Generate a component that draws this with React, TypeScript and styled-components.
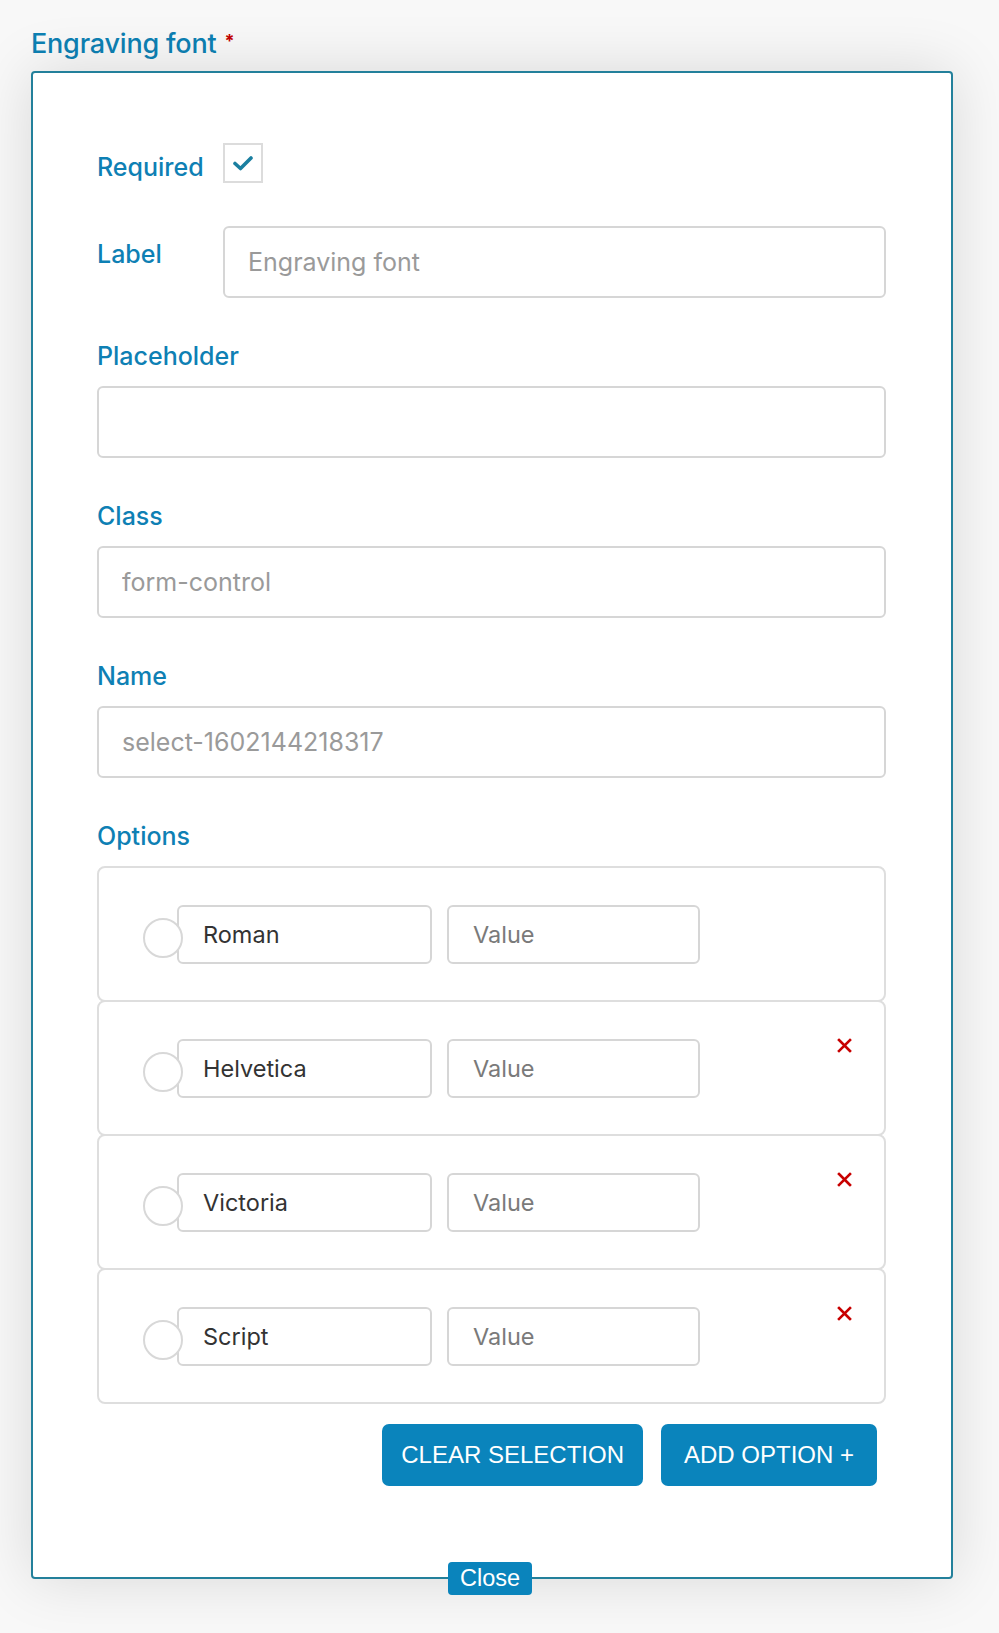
import React, { useState } from 'react';
import styled, { createGlobalStyle } from 'styled-components';

const GlobalStyle = createGlobalStyle`
  html, body {
    margin: 0;
    padding: 0;
    background: #f8f8f8;
  }
  body {
    font-family: Inter, "Noto Sans", sans-serif;
  }
`;

const Page = styled.div`
  padding: 26px 46px 40px 31px;
  min-height: 1633px;
  box-sizing: border-box;
`;

const FieldTitle = styled.div`
  display: flex;
  align-items: center;
  gap: 8px;
  height: 34px;
  margin-bottom: 11px;
  color: #0d80b3;
  font-size: 27px;
  font-weight: 500;
  letter-spacing: -0.2px;
`;

const Star = styled.span`
  color: #c40000;
  font-size: 18px;
  font-weight: 700;
  margin-top: -6px;
`;

const Panel = styled.div`
  position: relative;
  width: 922px;
  height: 1508px;
  box-sizing: border-box;
  background: #fff;
  border: 2px solid #23809b;
  border-radius: 4px;
  box-shadow: 0 0 60px rgba(0, 0, 0, 0.13);
  padding: 70px 65px 0 64px;
`;

const InlineRow = styled.div<{ $mb: number }>`
  display: flex;
  align-items: flex-start;
  margin-bottom: ${(p) => p.$mb}px;
`;

const Label = styled.label<{ $inline?: boolean; $pt?: number }>`
  display: block;
  color: #0e80b4;
  font-size: 25px;
  font-weight: 500;
  line-height: 30px;
  height: 30px;
  ${(p) => (p.$inline ? 'width: 126px; flex: none;' : 'margin-bottom: 15px;')}
  padding-top: ${(p) => p.$pt ?? 0}px;
`;

const CheckBox = styled.div`
  width: 40px;
  height: 40px;
  box-sizing: border-box;
  border: 2px solid #dcdcdc;
  display: flex;
  align-items: center;
  justify-content: center;
`;

const TextInput = styled.input`
  display: block;
  width: 100%;
  height: 72px;
  box-sizing: border-box;
  border: 2px solid #d6d6d6;
  border-radius: 6px;
  padding: 0 23px;
  font-family: Inter, "Noto Sans", sans-serif;
  font-size: 25px;
  color: #333;
  background: #fff;
  outline: none;
  &::placeholder {
    color: #9a9a9a;
  }
`;

const Group = styled.div`
  margin-bottom: 43px;
`;

const Options = styled.div`
  display: flex;
  flex-direction: column;
`;

const OptionRow = styled.div`
  position: relative;
  height: 136px;
  box-sizing: border-box;
  border: 2px solid #dedede;
  border-radius: 8px;
  margin-top: -2px;
  display: flex;
  align-items: center;
  padding-left: 44px;
  &:first-child {
    margin-top: 0;
  }
`;

const Radio = styled.span`
  position: relative;
  z-index: 1;
  width: 40px;
  height: 40px;
  box-sizing: border-box;
  border: 2px solid #d8d8d8;
  border-radius: 50%;
  background: #fff;
  margin-top: 8px;
  margin-right: -6px;
  flex: none;
`;

const OptionInput = styled.input<{ $w: number }>`
  width: ${(p) => p.$w}px;
  height: 59px;
  box-sizing: border-box;
  border: 2px solid #d6d6d6;
  border-radius: 6px;
  padding: 0 24px;
  font-family: Inter, "Noto Sans", sans-serif;
  font-size: 23.5px;
  color: #333;
  background: #fff;
  outline: none;
  &::placeholder {
    color: #7a7a7a;
  }
`;

const Inputs = styled.div`
  display: flex;
  gap: 15px;
`;

const Remove = styled.button`
  position: absolute;
  top: 34px;
  right: 31px;
  width: 18px;
  height: 18px;
  padding: 0;
  border: none;
  background: none;
  display: flex;
  align-items: center;
  justify-content: center;
  cursor: pointer;
`;

const ButtonBar = styled.div`
  display: flex;
  justify-content: flex-end;
  gap: 18px;
  margin-top: 20px;
  padding-right: 9px;
`;

const ActionButton = styled.button<{ $px: number }>`
  height: 62px;
  padding: 0 ${(p) => p.$px}px;
  border: none;
  border-radius: 7px;
  background: #0a84bc;
  color: #fff;
  font-family: "Liberation Sans", Arial, sans-serif;
  font-size: 24px;
  cursor: pointer;
`;

const CloseButton = styled.button`
  position: absolute;
  left: 415px;
  bottom: -18px;
  height: 33px;
  padding: 0 12px;
  border: none;
  border-radius: 4px;
  background: #0a84bc;
  color: #fff;
  font-family: "Liberation Sans", Arial, sans-serif;
  font-size: 23.5px;
  line-height: 33px;
  cursor: pointer;
`;

const options = ['Roman', 'Helvetica', 'Victoria', 'Script'];

const App: React.FC = () => {
  const [items] = useState(options);

  return (
    <Page>
      <GlobalStyle />
      <FieldTitle>
        Engraving font <Star>*</Star>
      </FieldTitle>
      <Panel>
        <InlineRow $mb={43}>
          <Label $inline $pt={9}>Required</Label>
          <CheckBox>
            <svg width="20" height="16" viewBox="0 0 20 16">
              <path d="M2 8.5 L7.5 13.5 L18 3" fill="none" stroke="#1a7fa0" strokeWidth="3.6" strokeLinecap="round" strokeLinejoin="round" />
            </svg>
          </CheckBox>
        </InlineRow>

        <InlineRow $mb={43}>
          <Label $inline $pt={13}>Label</Label>
          <TextInput placeholder="Engraving font" />
        </InlineRow>

        <Group>
          <Label>Placeholder</Label>
          <TextInput />
        </Group>

        <Group>
          <Label>Class</Label>
          <TextInput placeholder="form-control" />
        </Group>

        <Group>
          <Label>Name</Label>
          <TextInput placeholder="select-1602144218317" />
        </Group>

        <Label>Options</Label>
        <Options>
          {items.map((name, i) => (
            <OptionRow key={name}>
              <Radio />
              <Inputs>
                <OptionInput $w={255} defaultValue={name} />
                <OptionInput $w={253} placeholder="Value" />
              </Inputs>
              {i > 0 && (
                <Remove aria-label="Remove option">
                  <svg width="15" height="15" viewBox="0 0 15 15">
                    <path d="M2 2 L13 13 M13 2 L2 13" stroke="#c80000" strokeWidth="2.6" strokeLinecap="square" />
                  </svg>
                </Remove>
              )}
            </OptionRow>
          ))}
        </Options>

        <ButtonBar>
          <ActionButton $px={19}>CLEAR SELECTION</ActionButton>
          <ActionButton $px={23}>ADD OPTION +</ActionButton>
        </ButtonBar>

        <CloseButton>Close</CloseButton>
      </Panel>
    </Page>
  );
};

export default App;
